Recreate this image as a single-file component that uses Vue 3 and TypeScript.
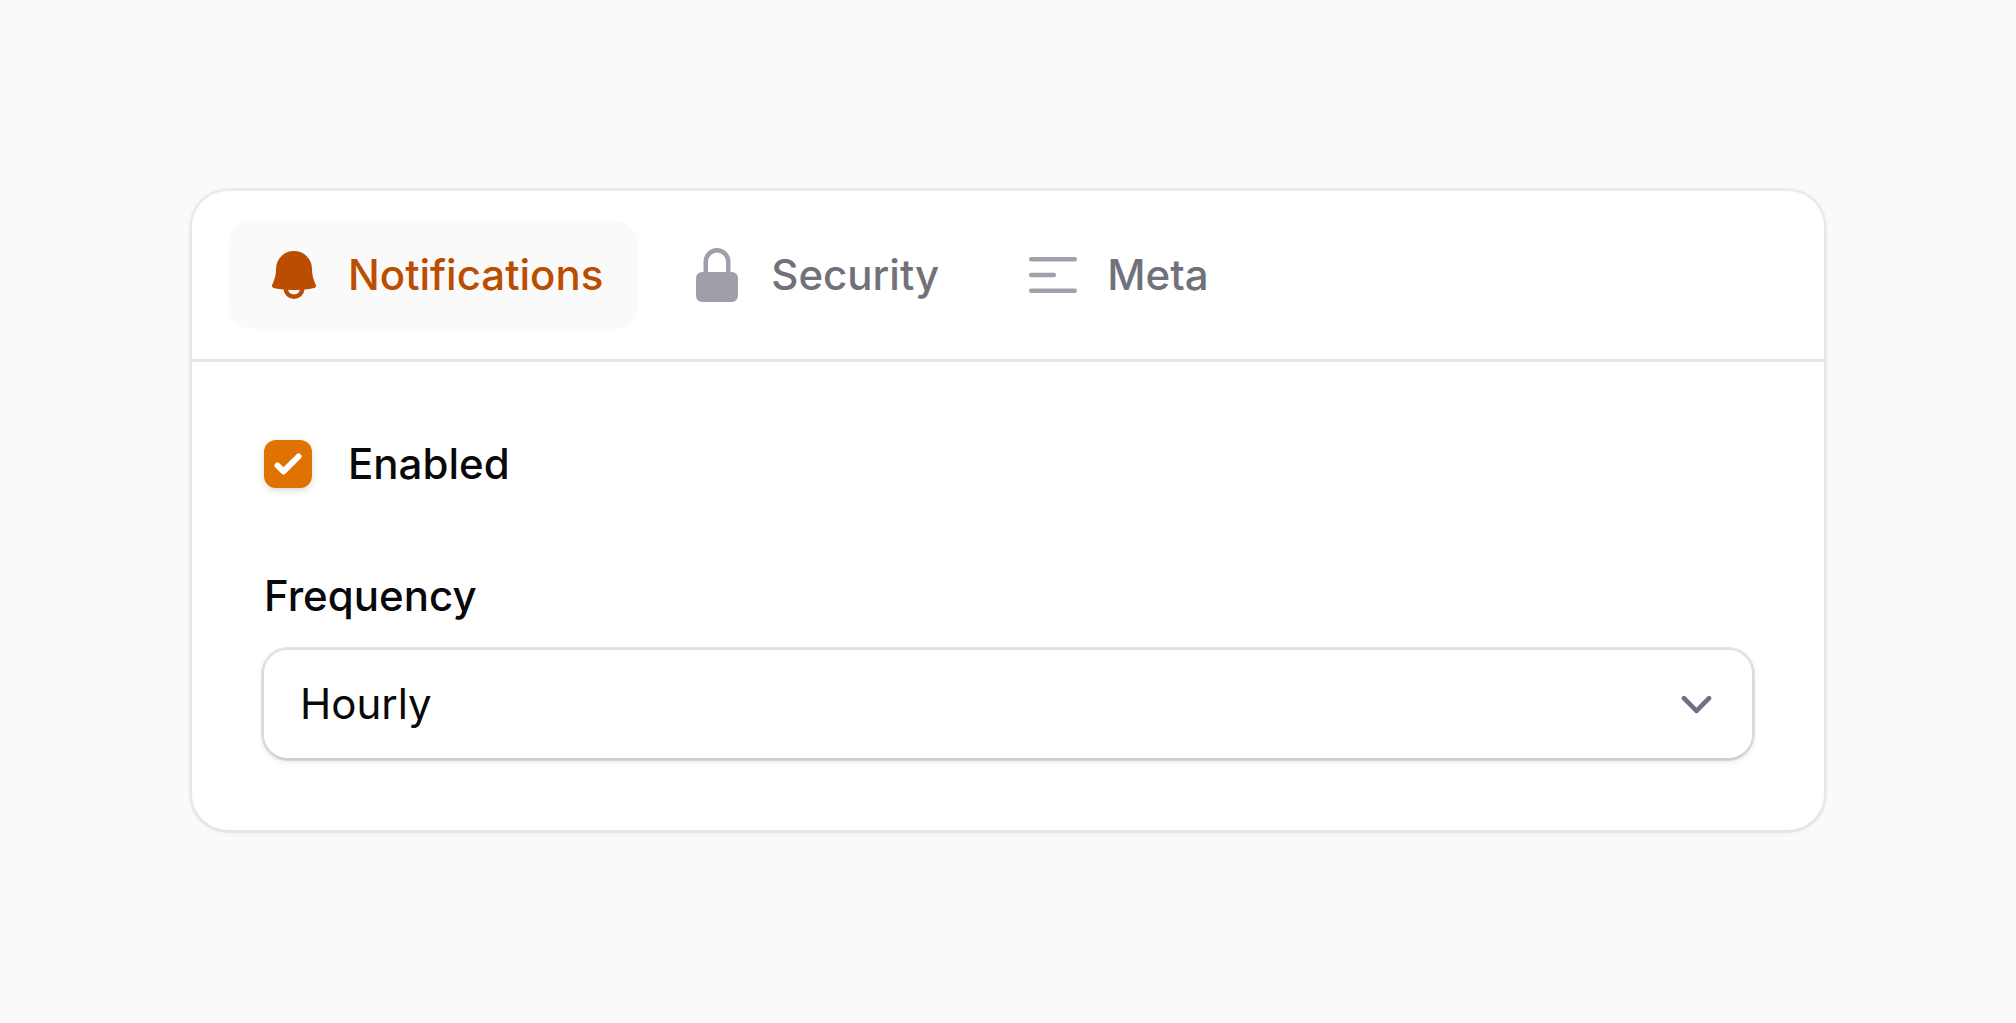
<script setup lang="ts">
import { ref } from 'vue'

interface Tab {
  id: string
  label: string
  icon: string
}

const tabs: Tab[] = [
  {
    id: 'notifications',
    label: 'Notifications',
    icon: 'M10 2a6 6 0 0 0-6 6c0 1.887-.454 3.665-1.257 5.234a.75.75 0 0 0 .515 1.076 32.91 32.91 0 0 0 3.256.508 3.5 3.5 0 0 0 6.972 0 32.903 32.903 0 0 0 3.256-.508.75.75 0 0 0 .515-1.076A11.448 11.448 0 0 1 16 8a6 6 0 0 0-6-6ZM8.05 14.943a33.54 33.54 0 0 0 3.9 0 2 2 0 0 1-3.9 0Z',
  },
  {
    id: 'security',
    label: 'Security',
    icon: 'M10 1a4.5 4.5 0 0 0-4.5 4.5V9H5a2 2 0 0 0-2 2v6a2 2 0 0 0 2 2h10a2 2 0 0 0 2-2v-6a2 2 0 0 0-2-2h-.5V5.5A4.5 4.5 0 0 0 10 1Zm3 8V5.5a3 3 0 1 0-6 0V9h6Z',
  },
  {
    id: 'meta',
    label: 'Meta',
    icon: 'M2 4.75A.75.75 0 0 1 2.75 4h14.5a.75.75 0 0 1 0 1.5H2.75A.75.75 0 0 1 2 4.75Zm0 10.5a.75.75 0 0 1 .75-.75h14.5a.75.75 0 0 1 0 1.5H2.75a.75.75 0 0 1-.75-.75ZM2 10a.75.75 0 0 1 .75-.75h7.5a.75.75 0 0 1 0 1.5h-7.5A.75.75 0 0 1 2 10Z',
  },
]

const activeTab = ref('notifications')
const enabled = ref(true)
const frequency = ref('hourly')
</script>

<template>
  <main class="page">
    <section class="card">
      <div class="tabs" role="tablist">
        <button
          v-for="tab in tabs"
          :id="`tab-${tab.id}`"
          :key="tab.id"
          type="button"
          role="tab"
          class="tab"
          :class="{ active: activeTab === tab.id }"
          :aria-selected="activeTab === tab.id"
          @click="activeTab = tab.id"
        >
          <svg class="tab-icon" viewBox="0 0 20 20" aria-hidden="true">
            <path :d="tab.icon" fill="currentColor" fill-rule="evenodd" clip-rule="evenodd" />
          </svg>
          <span>{{ tab.label }}</span>
        </button>
      </div>

      <form
        v-if="activeTab === 'notifications'"
        class="panel"
        role="tabpanel"
        aria-labelledby="tab-notifications"
        @submit.prevent
      >
        <label class="toggle" for="enabled">
          <span class="check">
            <input id="enabled" v-model="enabled" type="checkbox" />
            <svg v-if="enabled" viewBox="0 0 16 16" aria-hidden="true">
              <path
                fill="#fff"
                d="M12.207 4.793a1 1 0 0 1 0 1.414l-5 5a1 1 0 0 1-1.414 0l-2-2a1 1 0 0 1 1.414-1.414L6.5 9.086l4.293-4.293a1 1 0 0 1 1.414 0z"
              />
            </svg>
          </span>
          <span>Enabled</span>
        </label>

        <div class="field">
          <label for="frequency">Frequency</label>
          <div class="select">
            <select id="frequency" v-model="frequency">
              <option value="hourly">Hourly</option>
              <option value="daily">Daily</option>
              <option value="weekly">Weekly</option>
            </select>
            <svg viewBox="0 0 20 20" aria-hidden="true">
              <path
                d="m6 8 4 4 4-4"
                fill="none"
                stroke="#6b7280"
                stroke-width="1.5"
                stroke-linecap="round"
                stroke-linejoin="round"
              />
            </svg>
          </div>
        </div>
      </form>
    </section>
  </main>
</template>

<style>
body {
  margin: 0;
  background: #fafafa;
}
</style>

<style scoped>
.page {
  padding: 191px 192px;
  font-family: Inter, "Liberation Sans", sans-serif;
  font-size: 42px;
  font-weight: 500;
  line-height: 60px;
  color: #09090b;
  -webkit-font-smoothing: antialiased;
}

.card {
  background: #fff;
  border-radius: 36px;
  box-shadow:
    0 0 0 3px rgb(9 9 11 / 5%),
    0 3px 6px 0 rgb(0 0 0 / 5%);
}

.tabs {
  display: flex;
  gap: 12px;
  padding: 30px 36px;
  border-bottom: 3px solid #e4e4e5;
}

.tab {
  display: flex;
  align-items: center;
  gap: 24px;
  padding: 24px 36px;
  border: 0;
  border-radius: 24px;
  background: transparent;
  color: #71717b;
  font: inherit;
  cursor: pointer;
}

.tab.active {
  background: #fafafa;
  color: #bb4d00;
}

.tab-icon {
  width: 60px;
  height: 60px;
  color: #9f9fa9;
}

.tab.active .tab-icon {
  color: inherit;
}

.panel {
  display: flex;
  flex-direction: column;
  gap: 72px;
  padding: 72px;
}

.toggle {
  display: flex;
  align-items: center;
  align-self: flex-start;
  gap: 36px;
}

.check {
  display: grid;
  width: 48px;
  height: 48px;
}

.check > * {
  grid-area: 1 / 1;
  width: 48px;
  height: 48px;
}

.check svg {
  pointer-events: none;
}

.check input {
  appearance: none;
  margin: 0;
  border-radius: 12px;
  background: #fff;
  box-shadow:
    0 0 0 3px rgb(9 9 11 / 10%),
    0 3px 9px 0 rgb(0 0 0 / 10%);
}

.check input:checked {
  background: #e17100;
  box-shadow:
    0 3px 9px 0 rgb(0 0 0 / 10%),
    0 3px 6px -3px rgb(0 0 0 / 10%);
}

.field {
  display: flex;
  flex-direction: column;
  gap: 24px;
}

.select {
  display: grid;
  align-items: center;
  border-radius: 24px;
  box-shadow:
    0 0 0 3px rgb(9 9 11 / 10%),
    0 3px 9px 0 rgb(0 0 0 / 10%),
    0 3px 6px -3px rgb(0 0 0 / 10%);
}

.select > * {
  grid-area: 1 / 1;
}

.select select {
  appearance: none;
  width: 100%;
  height: 108px;
  padding: 0 96px 0 36px;
  border: 0;
  border-radius: 24px;
  background: #fff;
  color: inherit;
  font: inherit;
  font-weight: 400;
}

.select svg {
  justify-self: end;
  width: 63px;
  height: 63px;
  margin-right: 24px;
  pointer-events: none;
}
</style>
